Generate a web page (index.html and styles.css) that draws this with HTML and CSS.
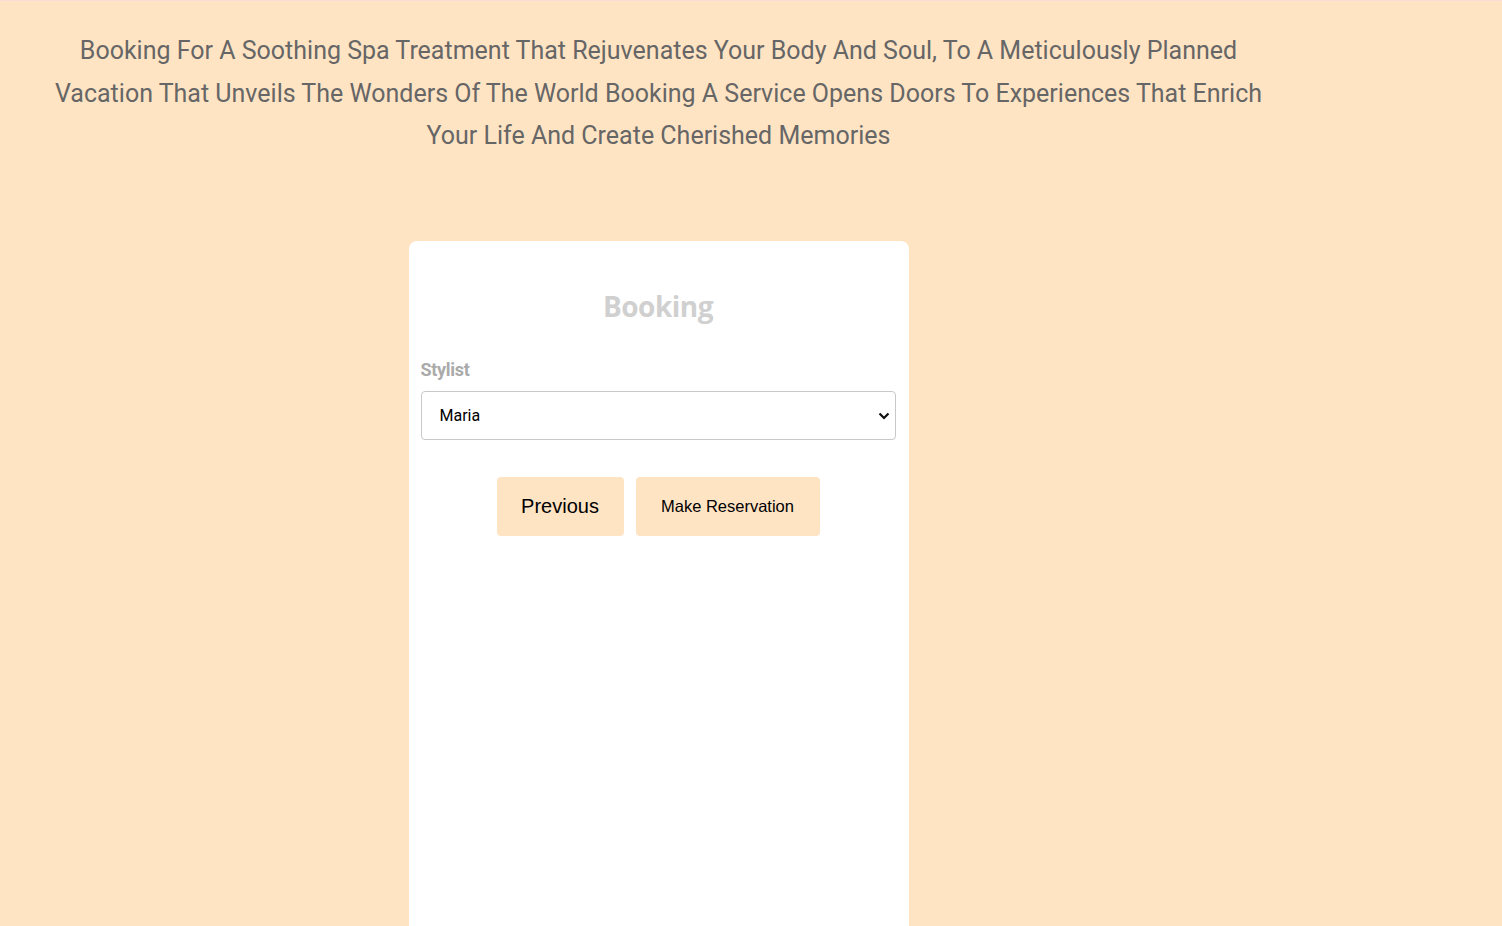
FILE: index.html
```html
<!DOCTYPE html>
<html lang="en">
<head>
<meta charset="utf-8">
<title>Booking</title>
<link rel="stylesheet" href="styles.css">
</head>
<body>
<div class="page">
  <div class="intro">
    <p class="intro-text">Booking For A Soothing Spa Treatment That Rejuvenates Your Body And Soul, To A Meticulously Planned Vacation That Unveils The Wonders Of The World Booking A Service Opens Doors To Experiences That Enrich Your Life And Create Cherished Memories</p>
  </div>
  <div class="card">
    <h2 class="card-title">Booking</h2>
    <label class="field-label" for="stylist">Stylist</label>
    <div class="select-wrap">
      <select id="stylist" class="select">
        <option>Maria</option>
      </select>
      <svg class="chevron" width="12" height="8" viewBox="0 0 12 8"><path d="M1.5 1.5 L6 6 L10.5 1.5" fill="none" stroke="#111" stroke-width="2.2"/></svg>
    </div>
    <div class="actions">
      <button class="btn btn-prev">Previous</button>
      <button class="btn btn-reserve">Make Reservation</button>
    </div>
  </div>
</div>
</body>
</html>
```
FILE: styles.css
```css
html, body {
  margin: 0;
  padding: 0;
  height: 100%;
}
body {
  background: #ffe4c4;
  border-top: 1px solid #fcdcd8;
  box-sizing: border-box;
  overflow: hidden;
}
.page {
  width: 1317px;
  display: flex;
  flex-direction: column;
  align-items: center;
}
.intro {
  width: 1215px;
  padding-top: 29px;
}
.intro-text {
  margin: 0;
  font-family: Roboto, "Liberation Sans", sans-serif;
  font-size: 25px;
  line-height: 42.5px;
  color: #666666;
  text-align: center;
}
.card {
  margin-top: 83px;
  width: 500px;
  height: 700px;
  background: #ffffff;
  border-radius: 8px 8px 0 0;
  padding: 45px 13px 0 12px;
  box-sizing: border-box;
  display: flex;
  flex-direction: column;
}
.card-title {
  margin: 0 0 32px;
  font-family: "Open Sans", "DejaVu Sans", sans-serif;
  font-weight: 700;
  font-size: 28px;
  line-height: 40px;
  color: #d0d0d0;
  text-align: center;
  letter-spacing: -0.5px;
}
.field-label {
  font-family: Roboto, "Liberation Sans", sans-serif;
  font-weight: 700;
  font-size: 18px;
  line-height: 24px;
  color: #aaaaaa;
  margin-bottom: 9px;
  letter-spacing: -0.3px;
}
.select-wrap {
  position: relative;
}
.select {
  width: 100%;
  height: 49px;
  border: 1px solid #c8c8c8;
  border-radius: 4px;
  background: #ffffff;
  padding: 0 18px;
  font-family: Roboto, "Liberation Sans", sans-serif;
  font-size: 16px;
  color: #000000;
  appearance: none;
  -webkit-appearance: none;
  box-sizing: border-box;
}
.chevron {
  position: absolute;
  right: 6px;
  top: 21px;
  pointer-events: none;
}
.actions {
  margin-top: 37px;
  display: flex;
  justify-content: center;
  gap: 12px;
}
.btn {
  height: 59px;
  border: none;
  border-radius: 4px;
  background: #ffe4c4;
  color: #000000;
  font-family: "Liberation Sans", Arial, sans-serif;
  cursor: pointer;
}
.btn-prev {
  width: 127px;
  font-size: 20px;
}
.btn-reserve {
  width: 184px;
  font-size: 16.5px;
}
```
